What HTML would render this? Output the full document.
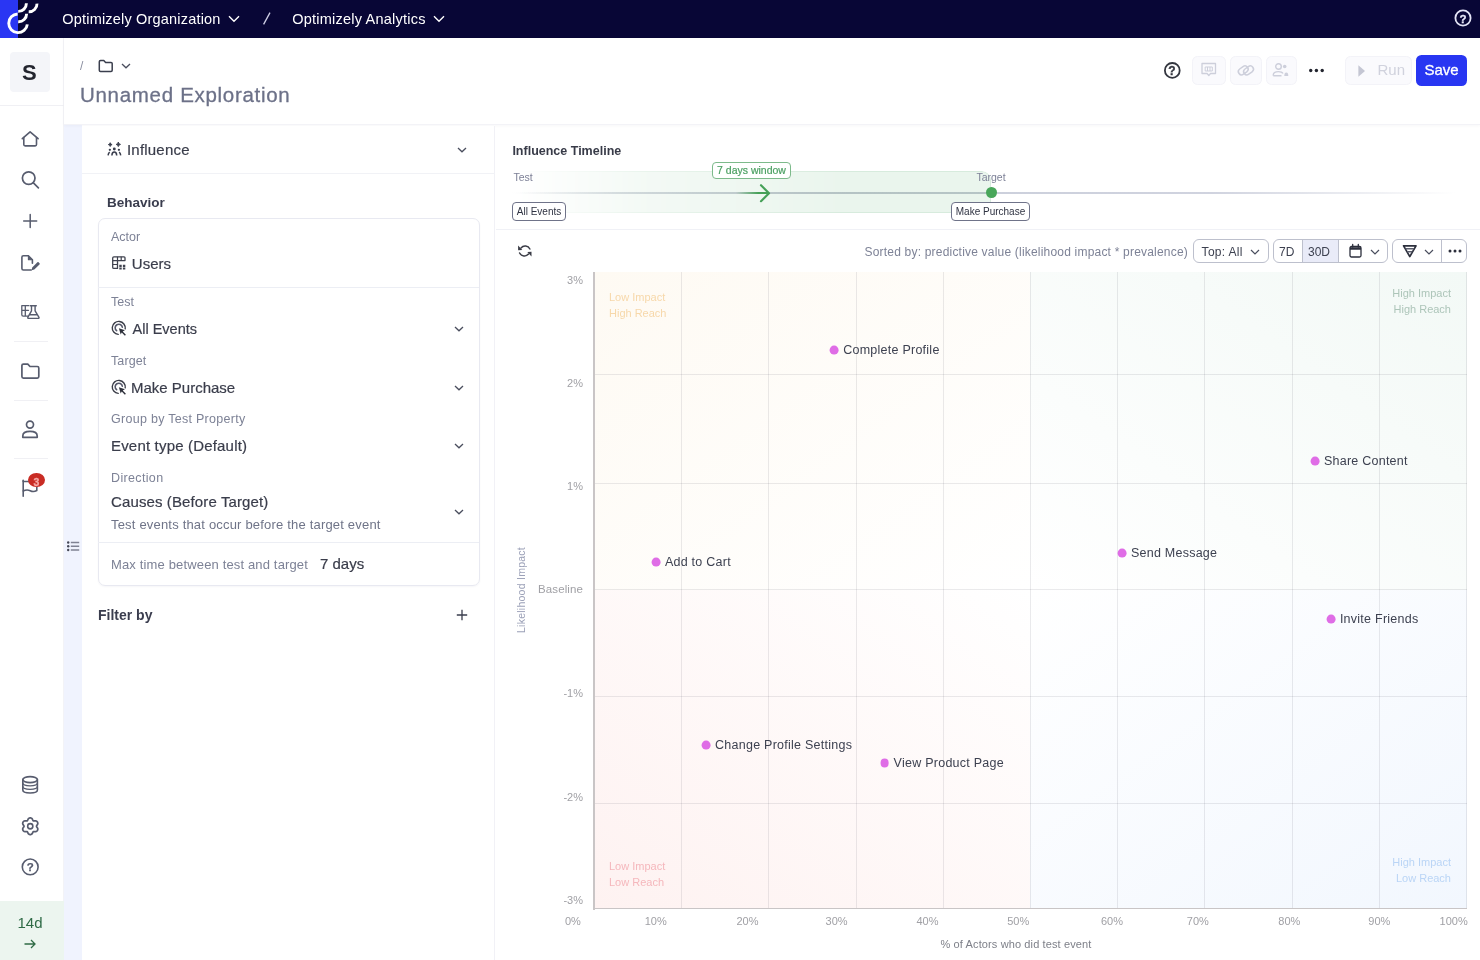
<!DOCTYPE html>
<html><head><meta charset="utf-8">
<style>
*{box-sizing:border-box;margin:0;padding:0}
html,body{width:1480px;height:960px;overflow:hidden;background:#fff}
body{font-family:"Liberation Sans",sans-serif;color:#3a3e4d;position:relative;opacity:.9999}
.abs{position:absolute}
.t{position:absolute;white-space:nowrap;line-height:20px;height:20px;margin-top:-10px}
svg{position:absolute;overflow:visible}
#topbar{left:0;top:0;width:1480px;height:38.400px;background:#080636}
#bluep{left:0;top:0;width:17.500px;height:38.400px;background:#2a36f3}
#side{left:0;top:38px;width:64px;height:922px;background:#fff;border-right:1px solid #f3f3f7}
#strip{left:64px;top:124.500px;width:18px;height:836px;background:#f0f3fe}
#hdr{left:64px;top:38px;width:1416px;height:87px;background:#fff;border-bottom:1px solid #f3f3f7;box-shadow:0 1px 3px rgba(20,20,60,.035)}
#lp{left:82px;top:126px;width:413px;height:834px;background:#fff;border-right:1px solid #f1f1f6}
.lbl{color:#7d8296;font-size:12.5px}
.val{color:#3a3d4b;font-size:15px;-webkit-text-stroke:.2px #3a3d4b}
.hbtn{position:absolute;top:55.500px;height:29.500px;border-radius:5.500px;background:#fafafd;border:1px solid #f3f3f8}
.tbtn{position:absolute;top:239px;height:24px;border-radius:6px;border:1px solid #bdc0cd;background:#fff}
.gl{position:absolute;background:rgba(70,70,85,.115)}
.xl,.yl{position:absolute;font-size:11px;color:#a0a0a5;line-height:1;white-space:nowrap}
.xl{top:920.700px;transform:translate(-50%,-50%)}
.yl{right:897px;transform:translateY(-50%)}
.dot{position:absolute;width:8.800px;height:8.800px;border-radius:50%;background:#df6de6;transform:translate(-50%,-50%)}
.dl{position:absolute;font-size:12.500px;letter-spacing:.25px;color:#3d4150;line-height:14px;height:14px;white-space:nowrap}
.q{position:absolute;font-size:11px;line-height:16.300px;white-space:nowrap}
.badge{position:absolute;height:19px;border:1px solid #6f7389;border-radius:4px;background:#fff;font-size:10px;color:#2f3342;text-align:center;line-height:17px;white-space:nowrap}
</style></head><body>

<!-- TOP BAR -->
<div id="topbar" class="abs"></div>
<div id="bluep" class="abs"></div>
<svg id="logo" style="left:0;top:0" width="60" height="38" viewBox="0 0 60 38" fill="none" stroke="#fff" stroke-width="2.9" stroke-linecap="butt">
<path d="M27.3 24.3 A9.3 9.3 0 1 1 17.6 14"/>
<path d="M18.2 11.4 A8 8 0 0 0 26.4 3.3"/>
<path d="M28.7 11.8 A8 8 0 0 0 37 3.6"/>
<path d="M18.2 21.8 A8 8 0 0 0 26.6 13.7"/>
</svg>
<div class="t" style="left:62.300px;top:18.500px;font-size:14.500px;color:#fff;letter-spacing:.19px">Optimizely Organization</div>
<svg style="left:228px;top:15px" width="12" height="8" viewBox="0 0 12 8" fill="none" stroke="#fff" stroke-width="1.400"><path d="M1 1.200 L6 6.200 L11 1.200"/></svg>
<svg style="left:262px;top:12px" width="10" height="13" viewBox="0 0 10 13" fill="none" stroke="#cfcfe6" stroke-width="1.300"><path d="M8 0.600 L1.600 12.400"/></svg>
<div class="t" style="left:292.300px;top:18.500px;font-size:14.500px;color:#fff;letter-spacing:.22px">Optimizely Analytics</div>
<svg style="left:433.300px;top:15px" width="12" height="8" viewBox="0 0 12 8" fill="none" stroke="#fff" stroke-width="1.400"><path d="M1 1.200 L6 6.200 L11 1.200"/></svg>
<svg style="left:1453.100px;top:8.100px" width="20" height="20" viewBox="0 0 20 20" fill="none" stroke="#e4e4f6" stroke-width="1.800"><circle cx="10" cy="10" r="7.600"/></svg>
<div class="t" style="left:1459.500px;top:18.800px;font-size:11.500px;font-weight:700;-webkit-text-stroke:.3px #e8e8f8;color:#e8e8f8">?</div>

<!-- SIDEBAR -->
<div id="side" class="abs"></div>
<div class="abs" style="left:10px;top:52px;width:40px;height:40px;border-radius:4px;background:#f4f5f9"></div>
<div class="t" style="left:22px;top:72.5px;font-size:22px;font-weight:700;color:#23252f">S</div>
<div class="abs" style="left:0;top:104.500px;width:64px;height:1px;background:#f0f0f4"></div>
<div class="abs" style="left:14px;top:340.500px;width:34px;height:1px;background:#f0f0f4"></div>
<div class="abs" style="left:14px;top:399.500px;width:34px;height:1px;background:#f0f0f4"></div>
<div class="abs" style="left:14px;top:458px;width:34px;height:1px;background:#f0f0f4"></div>
<div class="abs" style="left:0;top:901px;width:64px;height:59px;background:#ecf5ef"></div>
<div class="t" style="left:17.500px;top:923px;font-size:15px;color:#2f6b46">14d</div>
<svg style="left:24px;top:939px" width="12" height="10" viewBox="0 0 12 10" fill="none" stroke="#2f6b46" stroke-width="1.3"><path d="M0.5 5 H11 M7 1 L11 5 L7 9"/></svg>
<svg style="left:20.4px;top:129.5px" width="20" height="18" viewBox="0 0 20 18" fill="none" stroke="#575c6e" stroke-width="1.6" stroke-linecap="round" stroke-linejoin="round" ><path d="M2.300 8.700 L10.100 1.800 L18.100 8.700"/><path d="M3.800 7.500 V14.600 Q3.800 15.900 5.100 15.900 H15.200 Q16.500 15.900 16.500 14.600 V7.500"/></svg>
<svg style="left:20px;top:169px" width="20" height="20" viewBox="0 0 20 20" fill="none" stroke="#575c6e" stroke-width="1.7" stroke-linecap="round" stroke-linejoin="round" ><circle cx="8.700" cy="9.100" r="6.300"/><path d="M13.400 13.800 L18.400 18.800"/></svg>
<svg style="left:22px;top:213px" width="16" height="16" viewBox="0 0 16 16" fill="none" stroke="#575c6e" stroke-width="1.5" stroke-linecap="round" stroke-linejoin="round" ><path d="M8.200 1.500 V14.500 M1.700 8 H14.700"/></svg>
<svg style="left:20px;top:253.600px" width="21" height="18" viewBox="0 0 21 18" fill="none" stroke="#575c6e" stroke-width="1.600" stroke-linecap="round" stroke-linejoin="round"><path d="M11.200 16 H3.400 Q1.900 16 1.900 14.500 V3.300 Q1.900 1.800 3.400 1.800 H8.400 L12.400 5.800 V9.200"/><path d="M8.400 1.800 V5.800 H12.400" stroke-width="1.100" fill="#575c6e"/><path d="M11.600 16.200 L12.200 13.500 L17.400 8.300 Q18 7.700 18.600 8.300 L19.500 9.200 Q20.100 9.800 19.500 10.400 L14.300 15.600 Z" fill="#575c6e" stroke="none"/></svg>
<svg style="left:20px;top:304px" width="21" height="16" viewBox="0 0 21 16" fill="none" stroke="#575c6e" stroke-width="1.6" stroke-linecap="round" stroke-linejoin="round" ><path d="M1.800 1.700 H8.800 M1.800 1.700 V10.800 Q1.800 12.200 3.200 12.200 H8 M5.300 1.700 V12 M1.800 6.300 H8.500" stroke-width="1.300"/><path d="M10.300 1.700 H16.300 M11.500 1.700 V6.800 L7.800 13.400 Q7.500 14.400 8.600 14.400 H18.200 Q19.300 14.400 19 13.400 L15.100 6.800 V1.700 M9.500 10.800 H17.200" stroke-width="1.400"/></svg>
<svg style="left:20px;top:362px" width="21" height="18" viewBox="0 0 21 18" fill="none" stroke="#575c6e" stroke-width="1.7" stroke-linecap="round" stroke-linejoin="round" ><path d="M1.900 3.600 Q1.900 2.100 3.400 2.100 H7.800 L10 4.500 H17.300 Q18.800 4.500 18.800 6 V14.600 Q18.800 16.100 17.300 16.100 H3.400 Q1.900 16.100 1.900 14.600 Z"/></svg>
<svg style="left:20px;top:419px" width="20" height="20" viewBox="0 0 20 20" fill="none" stroke="#575c6e" stroke-width="1.7" stroke-linecap="round" stroke-linejoin="round" ><circle cx="10" cy="5.600" r="3.500"/><path d="M2.800 18.300 V17 Q2.800 12.400 10 12.400 Q17.200 12.400 17.200 17 V18.300 Z"/></svg>
<svg style="left:20px;top:477px" width="20" height="22" viewBox="0 0 20 22" fill="none" stroke="#575c6e" stroke-width="1.6" stroke-linecap="round" stroke-linejoin="round" ><path d="M3.200 3.300 V19.200"/><path d="M3.200 4.500 H16.800 V13.500 Q13.500 15.300 10.200 13.700 Q6.800 12.200 3.200 14"/></svg>
<div class="abs" style="left:28.200px;top:473.300px;width:16.600px;height:13.900px;border-radius:50%;background:#c92c24"></div><div class="t" style="left:33.600px;top:481.800px;font-size:10.500px;font-weight:700;-webkit-text-stroke:.3px #f7aba8;color:#f7aba8">3</div>
<svg style="left:20px;top:775px" width="20" height="20" viewBox="0 0 20 20" fill="none" stroke="#575c6e" stroke-width="1.6" stroke-linecap="round" stroke-linejoin="round" ><ellipse cx="10.100" cy="4.600" rx="7.300" ry="3"/><path d="M2.800 4.600 V15 Q2.800 18 10.100 18 Q17.400 18 17.400 15 V4.600"/><path d="M2.800 8 Q2.800 10.800 10.100 10.800 Q17.400 10.800 17.400 8 M2.800 11.500 Q2.800 14.300 10.100 14.300 Q17.400 14.300 17.400 11.500" stroke-width="1.300"/></svg>
<svg style="left:20px;top:816px" width="21" height="21" viewBox="0 0 21 21" fill="none" stroke="#575c6e" stroke-width="1.700" stroke-linejoin="round"><path d="M10.25 1.93 L10.79 1.97 L11.32 2.13 L11.81 2.42 L12.22 2.88 L12.56 3.46 L12.82 4.05 L13.06 4.55 L13.36 4.86 L13.78 4.97 L14.33 4.93 L14.98 4.86 L15.65 4.85 L16.25 4.99 L16.75 5.26 L17.15 5.64 L17.46 6.09 L17.69 6.58 L17.82 7.11 L17.81 7.69 L17.62 8.28 L17.29 8.85 L16.90 9.37 L16.59 9.83 L16.47 10.25 L16.59 10.67 L16.90 11.13 L17.29 11.65 L17.62 12.22 L17.81 12.81 L17.82 13.39 L17.69 13.92 L17.46 14.41 L17.15 14.86 L16.75 15.24 L16.25 15.51 L15.65 15.65 L14.98 15.64 L14.33 15.57 L13.78 15.53 L13.36 15.64 L13.06 15.95 L12.82 16.45 L12.56 17.04 L12.22 17.62 L11.81 18.08 L11.32 18.37 L10.79 18.53 L10.25 18.57 L9.71 18.53 L9.18 18.37 L8.69 18.08 L8.28 17.62 L7.94 17.04 L7.68 16.45 L7.44 15.95 L7.14 15.64 L6.72 15.53 L6.17 15.57 L5.52 15.64 L4.85 15.65 L4.25 15.51 L3.75 15.24 L3.35 14.86 L3.04 14.41 L2.81 13.92 L2.68 13.39 L2.69 12.81 L2.88 12.22 L3.21 11.65 L3.60 11.13 L3.91 10.67 L4.03 10.25 L3.91 9.83 L3.60 9.37 L3.21 8.85 L2.88 8.28 L2.69 7.69 L2.68 7.11 L2.81 6.58 L3.04 6.09 L3.35 5.64 L3.75 5.26 L4.25 4.99 L4.85 4.85 L5.52 4.86 L6.17 4.93 L6.72 4.97 L7.14 4.86 L7.44 4.55 L7.68 4.05 L7.94 3.46 L8.28 2.88 L8.69 2.42 L9.18 2.13 L9.71 1.97 Z"/><circle cx="10.25" cy="10.25" r="2.600" stroke-width="1.600"/></svg>
<svg style="left:20px;top:857px" width="20" height="20" viewBox="0 0 20 20" fill="none" stroke="#575c6e" stroke-width="1.6" stroke-linecap="round" stroke-linejoin="round" ><circle cx="10.200" cy="9.900" r="7.900"/></svg>
<div class="t" style="left:26.800px;top:867.400px;font-size:11.500px;font-weight:700;-webkit-text-stroke:.25px #575c6e;color:#575c6e">?</div>


<!-- STRIP -->
<div id="strip" class="abs"></div>
<svg style="left:65.500px;top:540.500px" width="14" height="11" viewBox="0 0 14 11" fill="none" stroke="#7f8293" stroke-width="1.600"><path d="M4.800 1.500 H13.200 M4.800 5.300 H13.200 M4.800 9 H13.200"/><g fill="#454857" stroke="none"><circle cx="2.200" cy="1.500" r="1.200"/><circle cx="2.200" cy="5.300" r="1.200"/><circle cx="2.200" cy="9" r="1.200"/></g></svg>


<!-- HEADER -->
<div id="hdr" class="abs"></div>
<div class="t" style="left:80px;top:65.500px;font-size:12px;color:#8b8fa1">/</div>
<div class="t" style="left:80px;top:94.500px;font-size:20.500px;color:#6c7188;letter-spacing:.7px;-webkit-text-stroke:.3px #6c7188">Unnamed Exploration</div>
<svg style="left:98px;top:58.500px" width="16" height="14" viewBox="0 0 16 14" fill="none" stroke="#3a3e4d" stroke-width="1.500" stroke-linejoin="round"><path d="M1.300 2.700 Q1.300 1.500 2.500 1.500 H5.800 L7.600 3.400 H13 Q14.200 3.400 14.200 4.600 V11.300 Q14.200 12.500 13 12.500 H2.500 Q1.300 12.500 1.300 11.300 Z"/></svg>
<svg style="left:120.500px;top:62.500px" width="10" height="6" viewBox="0 0 10 6" fill="none" stroke="#4a4e5e" stroke-width="1.300"><path d="M1 1 L5 4.800 L9 1"/></svg>
<svg style="left:1162.500px;top:61px" width="19" height="19" viewBox="0 0 19 19" fill="none" stroke="#33363f" stroke-width="1.800"><circle cx="9.300" cy="9.400" r="7.400"/></svg>
<div class="t" style="left:1168.300px;top:70.900px;font-size:12px;font-weight:700;-webkit-text-stroke:.3px #33363f;color:#33363f">?</div>
<div class="hbtn" style="left:1191.500px;width:34.500px"></div><div class="hbtn" style="left:1230px;width:31.500px"></div><div class="hbtn" style="left:1265.500px;width:31px"></div>
<svg style="left:1200px;top:62px" width="18" height="17" viewBox="0 0 18 17" fill="none" stroke="#cdcfdb" stroke-width="1.300" stroke-linejoin="round"><path d="M2 1.500 H15.500 V11.500 H10.500 L8.800 13.600 L7.100 11.500 H2 Z"/><path d="M5.200 5 H12.300 V9 H5.200 Z M7.500 5 V9 M10 5 V9" stroke-width="1"/></svg>
<svg style="left:1236px;top:62px" width="20" height="17" viewBox="0 0 20 17" fill="none" stroke="#cdcfdb" stroke-width="1.500"><rect x="2" y="5.200" width="10.500" height="6.400" rx="3.200" transform="rotate(-36 7.250 8.400)"/><rect x="7.300" y="5.200" width="10.500" height="6.400" rx="3.200" transform="rotate(-36 12.550 8.400)"/></svg>
<svg style="left:1272px;top:62px" width="18" height="17" viewBox="0 0 18 17" fill="none" stroke="#cdcfdb" stroke-width="1.400"><circle cx="6.500" cy="4.500" r="2.800"/><path d="M1.300 13.800 V12.800 Q1.300 9.600 6.500 9.600 Q10 9.600 11 11.500 M1.300 13.800 H9.500"/><circle cx="12.700" cy="4.500" r="1.800" fill="#cdcfdb" stroke="none"/><path d="M12.300 13.900 Q12.300 10.500 14.300 10.500 Q16.300 10.500 16.300 13.900 Z" fill="#cdcfdb" stroke="none"/></svg>
<svg style="left:1308px;top:68px" width="17" height="5" viewBox="0 0 17 5" fill="#23252f"><circle cx="2.700" cy="2.500" r="1.700"/><circle cx="8.400" cy="2.500" r="1.700"/><circle cx="14.200" cy="2.500" r="1.700"/></svg>
<div class="hbtn" style="left:1344.500px;width:67.500px"></div>
<svg style="left:1358px;top:64.500px" width="8" height="12" viewBox="0 0 8 12" fill="#c4c6d3"><path d="M0.400 0.300 L7 6 L0.400 11.700 Z"/></svg>
<div class="t" style="left:1377.500px;top:69.800px;font-size:15px;color:#d0d2dd">Run</div>
<div class="abs" style="left:1416.300px;top:55px;width:50.500px;height:30.500px;border-radius:5.500px;background:#2836f2"></div>
<div class="t" style="left:1424.500px;top:69.800px;font-size:15px;color:#fff;-webkit-text-stroke:.3px #fff">Save</div>


<!-- LEFT PANEL -->
<div id="lp" class="abs"></div>
<div class="abs" style="left:82px;top:172.500px;width:413px;height:1px;background:#f1f2f6"></div>
<div class="t val" style="left:127px;top:149.6px;letter-spacing:.2px">Influence</div>
<div class="t" style="left:107px;top:202.800px;font-size:13.500px;font-weight:700;color:#3a3d4e">Behavior</div>
<div class="abs" style="left:97.500px;top:218px;width:382px;height:368px;border:1px solid #e8e9f1;border-radius:7px;box-shadow:0 1px 2px rgba(30,30,80,.04)"></div>
<div class="abs" style="left:98px;top:286.500px;width:381px;height:1px;background:#eceef4"></div>
<div class="abs" style="left:98px;top:541.500px;width:381px;height:1px;background:#eceef4"></div>
<div class="t lbl" style="left:111px;top:236.500px">Actor</div>
<div class="t val" style="left:131.800px;top:263.5px">Users</div>
<div class="t lbl" style="left:111px;top:301.500px">Test</div>
<div class="t val" style="left:132.500px;top:328.9px;font-size:14.500px">All Events</div>
<div class="t lbl" style="left:111px;top:360.500px;letter-spacing:.1px">Target</div>
<div class="t val" style="left:131px;top:388.2px">Make Purchase</div>
<div class="t lbl" style="left:111px;top:418.500px;letter-spacing:.28px">Group by Test Property</div>
<div class="t val" style="left:111px;top:446.1px;letter-spacing:.18px">Event type (Default)</div>
<div class="t lbl" style="left:111px;top:477.500px;letter-spacing:.35px">Direction</div>
<div class="t val" style="left:111px;top:501.6px;letter-spacing:.12px">Causes (Before Target)</div>
<div class="t lbl" style="left:111px;top:525.1px;color:#6f7488;font-size:13px;letter-spacing:.19px">Test events that occur before the target event</div>
<div class="t lbl" style="left:111px;top:564.8px;font-size:13px;letter-spacing:.15px">Max time between test and target</div>
<div class="t val" style="left:320px;top:564.200px">7 days</div>
<div class="t" style="left:98px;top:614.9px;font-size:14px;font-weight:700;color:#3a3d4e">Filter by</div>
<svg style="left:104px;top:138px" width="22" height="22" viewBox="0 0 22 22" fill="#3a3e4d" stroke="none"><path d="M6.200 4.700 L6.800 6 L8.100 6.600 L6.800 7.200 L6.200 8.500 L5.600 7.200 L4.300 6.600 L5.600 6 Z" stroke="#3a3e4d" stroke-width=".9" stroke-linejoin="round"/><path d="M14.300 4 L15 5.700 L16.500 6.400 L15 7.100 L14.300 8.600 L13.600 7.100 L12.100 6.400 L13.600 5.700 Z" stroke="#3a3e4d" stroke-width=".9" stroke-linejoin="round"/><circle cx="5.850" cy="11.800" r="1.150"/><circle cx="10.300" cy="11" r="1.450"/><circle cx="14.900" cy="11.800" r="1.150"/><path d="M7.900 17.400 Q8 14 10.300 14 Q12.600 14 12.700 17.400" fill="none" stroke="#3a3e4d" stroke-width="1.500"/><path d="M4.100 17.400 Q4.300 15 5.700 14.100" fill="none" stroke="#3a3e4d" stroke-width="1.500"/><path d="M16.700 17.400 Q16.500 15 15.100 14.100" fill="none" stroke="#3a3e4d" stroke-width="1.500"/></svg>
<svg style="left:456.5px;top:146.5px" width="10" height="6" viewBox="0 0 10 6" fill="none" stroke="#4a4e5e" stroke-width="1.300"><path d="M1 1 L5 4.800 L9 1"/></svg>
<svg style="left:453.5px;top:325.5px" width="10" height="6" viewBox="0 0 10 6" fill="none" stroke="#4a4e5e" stroke-width="1.300"><path d="M1 1 L5 4.800 L9 1"/></svg>
<svg style="left:453.5px;top:384.5px" width="10" height="6" viewBox="0 0 10 6" fill="none" stroke="#4a4e5e" stroke-width="1.300"><path d="M1 1 L5 4.800 L9 1"/></svg>
<svg style="left:453.5px;top:443px" width="10" height="6" viewBox="0 0 10 6" fill="none" stroke="#4a4e5e" stroke-width="1.300"><path d="M1 1 L5 4.800 L9 1"/></svg>
<svg style="left:453.5px;top:508.5px" width="10" height="6" viewBox="0 0 10 6" fill="none" stroke="#4a4e5e" stroke-width="1.300"><path d="M1 1 L5 4.800 L9 1"/></svg>
<svg style="left:455.500px;top:608.500px" width="12" height="12" viewBox="0 0 12 12" fill="none" stroke="#3a3e4d" stroke-width="1.300"><path d="M6 0.800 V11.200 M0.800 6 H11.200"/></svg>
<svg style="left:108px;top:252px" width="22" height="22" viewBox="0 0 22 22" fill="none" stroke="#3f424e" stroke-width="1.300" stroke-linejoin="round"><path d="M5.900 4.800 H16 Q17 4.800 17 5.800 V8.600 H9.500 V16.400 H5.900 Q4.700 16.400 4.700 15.200 V6 Q4.700 4.800 5.900 4.800 Z"/><path d="M9.500 4.800 V8.600 M13.200 4.800 V8.600 M4.700 8.600 H9.500 M4.700 12.500 H9.500" stroke-width="1.200"/><path d="M11.300 12.800 h2.400 v2.100 h-2.400 z M14.900 12.800 h2.400 v2.100 h-2.400 z M11.300 15.500 h2.400 v2.100 h-2.400 z M14.900 15.500 h2.400 v2.100 h-2.400 z" fill="#3f424e" stroke="none"/></svg>
<svg style="left:108px;top:318px" width="22" height="22" viewBox="0 0 22 22" fill="none" stroke="#3a3d48" stroke-width="1.400" stroke-linecap="round"><path d="M10.200 16.400 A6.500 6.500 0 1 1 17.200 10.800"/><path d="M8.600 12.700 A3.600 3.600 0 1 1 14.300 9.200" stroke-width="1.600" stroke="#55586a"/><path d="M10.900 10.300 L16.900 12.300 L14.700 13.500 L17.900 16.700 L16.900 17.700 L13.700 14.500 L12.700 16.600 Z" fill="#2c2f3a" stroke="none"/></svg>
<svg style="left:108px;top:377px" width="22" height="22" viewBox="0 0 22 22" fill="none" stroke="#3a3d48" stroke-width="1.400" stroke-linecap="round"><path d="M10.200 16.400 A6.500 6.500 0 1 1 17.200 10.800"/><path d="M8.600 12.700 A3.600 3.600 0 1 1 14.300 9.200" stroke-width="1.600" stroke="#55586a"/><path d="M10.900 10.300 L16.900 12.300 L14.700 13.500 L17.900 16.700 L16.900 17.700 L13.700 14.500 L12.700 16.600 Z" fill="#2c2f3a" stroke="none"/></svg>


<!-- RIGHT PANEL -->
<div class="t" style="left:512.400px;top:150.8px;font-size:12.500px;font-weight:700;color:#383b48">Influence Timeline</div>
<div class="abs" style="left:516px;top:170.500px;width:475px;height:42px;border-radius:0 9px 9px 0;border:1px solid rgba(150,200,165,.22);border-left:none;background:#eaf5ed;-webkit-mask-image:linear-gradient(to right,transparent 0,rgba(0,0,0,.55) 130px,#000 330px);mask-image:linear-gradient(to right,transparent 0,rgba(0,0,0,.55) 130px,#000 330px)"></div>
<div class="abs" style="left:512px;top:192px;width:944px;height:2.400px;background:linear-gradient(to right,rgba(200,204,216,0) 0,rgba(200,204,216,.55) 110px,#c9ccd8 300px,#ccd0dc 480px,#d0d3df 700px,rgba(208,211,223,0) 944px)"></div>
<div class="abs" style="left:520px;top:192px;width:471px;height:2.400px;background:linear-gradient(to right,rgba(170,190,182,0) 0,rgba(160,185,175,.2) 120px,rgba(160,185,175,.5) 330px)"></div>
<div class="abs" style="left:736px;top:192px;width:32px;height:2.400px;background:linear-gradient(to right,rgba(70,161,88,0),#46a158 70%)"></div>
<svg style="left:752px;top:183px" width="20" height="20" viewBox="0 0 20 20" fill="none" stroke="#46a158" stroke-width="2.2" stroke-linecap="round" stroke-linejoin="round"><path d="M9 2.200 L17 10.200 L9 18.200"/></svg>
<div class="abs" style="left:985.800px;top:186.800px;width:10.800px;height:10.800px;border-radius:50%;background:#48a65a"></div>
<div class="t" style="left:513.500px;top:176.500px;font-size:10.500px;color:#7d8197">Test</div>
<div class="t" style="left:961px;width:60px;text-align:center;top:176.500px;font-size:10.500px;color:#7d8197">Target</div>
<div class="badge" style="left:712px;top:162px;width:79px;height:17px;line-height:15px;border-color:#7dba8b;color:#4a9f61;font-size:10.500px;-webkit-text-stroke:.2px #4a9f61">7 days window</div>
<div class="badge" style="left:512px;top:201.500px;width:54px">All Events</div>
<div class="badge" style="left:951px;top:201.500px;width:79px">Make Purchase</div>

<div class="abs" style="left:496px;top:229px;width:984px;height:1px;background:#f0f1f6"></div>
<div class="t" style="right:292px;left:auto;top:251.500px;font-size:12px;letter-spacing:.2px;color:#7d8296">Sorted by: predictive value (likelihood impact * prevalence)</div>
<div class="tbtn" style="left:1192.500px;width:76px"></div>
<div class="t" style="left:1201.600px;top:251.500px;font-size:12px;letter-spacing:.3px;color:#3d4150">Top: All</div>
<svg style="left:1250px;top:248.500px" width="10" height="6" viewBox="0 0 10 6" fill="none" stroke="#4a4e5e" stroke-width="1.200"><path d="M1 1 L5 5 L9 1"/></svg>
<div class="tbtn" style="left:1273px;width:115px;overflow:hidden"><div class="abs" style="left:27.500px;top:0;width:37.500px;height:22px;background:#e9ebf8;border-left:1px solid #bdc0cd;border-right:1px solid #bdc0cd"></div></div>
<div class="t" style="left:1279px;top:251.500px;font-size:12px;color:#3d4150">7D</div>
<div class="t" style="left:1308px;top:251.500px;font-size:12px;color:#3d4150">30D</div>
<svg style="left:1349px;top:244px" width="13" height="14" viewBox="0 0 13 14" fill="none" stroke="#2c2f3c" stroke-width="1.300"><rect x="1" y="2.500" width="11" height="10.500" rx="1.500"/><path d="M1 5 H12 M1 4 H12" /><path d="M3.700 0.500 V3 M9.300 0.500 V3" stroke-linecap="round"/></svg>
<svg style="left:1370px;top:248.500px" width="10" height="6" viewBox="0 0 10 6" fill="none" stroke="#4a4e5e" stroke-width="1.200"><path d="M1 1 L5 5 L9 1"/></svg>
<div class="tbtn" style="left:1392px;width:75px"></div>
<div class="abs" style="left:1441px;top:239px;width:1px;height:24px;background:#bdc0cd"></div>
<svg style="left:1401.500px;top:243.500px" width="16" height="15" viewBox="0 0 16 15" fill="none" stroke="#2c2f3c" stroke-width="1.700" stroke-linejoin="round"><path d="M1.600 1.800 H14 L7.800 12.600 Z"/><path d="M3.600 4.800 H12 M5.400 7.800 H10.200" stroke-width="1.400" stroke="#5a5d6c"/></svg>
<svg style="left:1424px;top:248.500px" width="10" height="6" viewBox="0 0 10 6" fill="none" stroke="#4a4e5e" stroke-width="1.200"><path d="M1 1 L5 5 L9 1"/></svg>
<svg style="left:1448px;top:249px" width="14" height="4" viewBox="0 0 14 4" fill="#2c2f3c"><circle cx="2" cy="2" r="1.500"/><circle cx="7" cy="2" r="1.500"/><circle cx="12" cy="2" r="1.500"/></svg>
<svg style="left:517px;top:244px" width="16" height="15" viewBox="0 0 16 15" fill="none" stroke="#3a3c46" stroke-width="1.500" stroke-linecap="round"><path d="M12.900 5 A5.400 5.400 0 0 0 4 3.900"/><path d="M2.600 9 A5.400 5.400 0 0 0 11.500 10.100"/><path d="M1.100 1.600 L5.300 5.900 L1.100 6.200 Z M14.500 12.400 L10.300 8.100 L14.500 7.800 Z" fill="#3a3c46" stroke="none"/></svg>

<div class="abs" id="chart" style="left:594px;top:272px;width:873px;height:637px;overflow:hidden">
<div class="abs" style="left:0;top:0;width:436px;height:318px;background:linear-gradient(to bottom right,#fefaf3 0%,#ffffff 100%)"></div>
<div class="abs" style="left:436px;top:0;width:437px;height:318px;background:linear-gradient(to bottom left,#f3f9f6 0%,#ffffff 100%)"></div>
<div class="abs" style="left:0;top:318px;width:436px;height:319px;background:linear-gradient(to top right,#fef2f1 0%,#ffffff 100%)"></div>
<div class="abs" style="left:436px;top:318px;width:437px;height:319px;background:linear-gradient(to top left,#f2f7fe 0%,#ffffff 100%)"></div>
</div>
<div class="gl" style="left:680.9px;top:272px;width:1px;height:636px"></div>
<div class="gl" style="left:768.2px;top:272px;width:1px;height:636px"></div>
<div class="gl" style="left:855.5px;top:272px;width:1px;height:636px"></div>
<div class="gl" style="left:942.9px;top:272px;width:1px;height:636px"></div>
<div class="gl" style="left:1029.5px;top:272px;width:1px;height:636px"></div>
<div class="gl" style="left:1117.1px;top:272px;width:1px;height:636px"></div>
<div class="gl" style="left:1204.3px;top:272px;width:1px;height:636px"></div>
<div class="gl" style="left:1291.5px;top:272px;width:1px;height:636px"></div>
<div class="gl" style="left:1378.8px;top:272px;width:1px;height:636px"></div>
<div class="gl" style="left:1466.3px;top:272px;width:1px;height:636px"></div>
<div class="gl" style="left:595px;top:374.1px;width:872px;height:1px"></div>
<div class="gl" style="left:595px;top:483.1px;width:872px;height:1px"></div>
<div class="gl" style="left:595px;top:588.7px;width:872px;height:1px"></div>
<div class="gl" style="left:595px;top:696.3px;width:872px;height:1px"></div>
<div class="gl" style="left:595px;top:803.3px;width:872px;height:1px"></div>
<div class="abs" style="left:593.400px;top:271.500px;width:1.600px;height:638px;background:#c9c5c6"></div>
<div class="abs" style="left:593.400px;top:907.800px;width:874px;height:1.600px;background:#c9c5c6"></div>
<div class="xl" style="left:572.9px">0%</div>
<div class="xl" style="left:655.7px">10%</div>
<div class="xl" style="left:747.5px">20%</div>
<div class="xl" style="left:836.6px">30%</div>
<div class="xl" style="left:927.5px">40%</div>
<div class="xl" style="left:1018.2px">50%</div>
<div class="xl" style="left:1112.0px">60%</div>
<div class="xl" style="left:1197.8px">70%</div>
<div class="xl" style="left:1289.3px">80%</div>
<div class="xl" style="left:1379.3px">90%</div>
<div class="xl" style="left:1453.6px">100%</div>
<div class="yl" style="top:279.5px">3%</div>
<div class="yl" style="top:383.0px">2%</div>
<div class="yl" style="top:486.0px">1%</div>
<div class="yl" style="top:589.5px;font-size:11.500px;letter-spacing:.1px">Baseline</div>
<div class="yl" style="top:692.5px">-1%</div>
<div class="yl" style="top:796.5px">-2%</div>
<div class="yl" style="top:899.5px">-3%</div>
<div class="abs" style="left:520.500px;top:590px;font-size:10.500px;letter-spacing:.25px;color:#9ca1b8;white-space:nowrap;line-height:1;transform:translate(-50%,-50%) rotate(-90deg)">Likelihood Impact</div>
<div class="t" style="left:940.500px;top:944px;font-size:11px;letter-spacing:.12px;color:#7e8089">% of Actors who did test event</div>
<div class="q" style="left:609px;top:288.500px;color:#f7d8aa">Low Impact<br>High Reach</div>
<div class="q" style="right:29px;top:284.500px;color:#adc5b9;text-align:right">High Impact<br>High Reach</div>
<div class="q" style="left:609px;top:857.500px;color:#f5b7bc">Low Impact<br>Low Reach</div>
<div class="q" style="right:29px;top:853.500px;color:#bad5f6;text-align:right">High Impact<br>Low Reach</div>
<div class="dot" style="left:834.3px;top:350.0px"></div><div class="dl" style="left:843.2px;top:342.7px">Complete Profile</div>
<div class="dot" style="left:1315.0px;top:461.3px"></div><div class="dl" style="left:1323.9px;top:454.0px">Share Content</div>
<div class="dot" style="left:1122.0px;top:553.0px"></div><div class="dl" style="left:1130.9px;top:545.7px">Send Message</div>
<div class="dot" style="left:656.0px;top:562.3px"></div><div class="dl" style="left:664.9px;top:555.0px">Add to Cart</div>
<div class="dot" style="left:1331.0px;top:619.0px"></div><div class="dl" style="left:1339.9px;top:611.7px">Invite Friends</div>
<div class="dot" style="left:706.2px;top:744.8px"></div><div class="dl" style="left:715.1px;top:737.5px">Change Profile Settings</div>
<div class="dot" style="left:884.7px;top:763.2px"></div><div class="dl" style="left:893.6px;top:755.9px">View Product Page</div>


</body></html>
